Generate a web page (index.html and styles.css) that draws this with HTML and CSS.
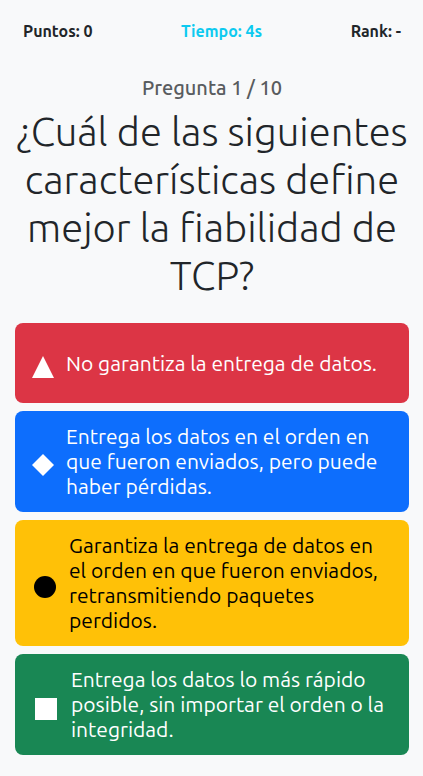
FILE: index.html
```html
<!DOCTYPE html>
<html lang="es">
<head>
<meta charset="utf-8">
<meta name="viewport" content="width=device-width, initial-scale=1">
<title>Pregunta 1 / 10</title>
<link rel="stylesheet" href="styles.css">
</head>
<body>
<header class="status">
  <span>Puntos: 0</span>
  <span class="time">Tiempo: 4s</span>
  <span>Rank: -</span>
</header>
<main class="quiz">
  <h5 class="counter">Pregunta 1 / 10</h5>
  <h1 class="question">¿Cuál de las siguientes características define mejor la fiabilidad de TCP?</h1>
  <div class="options">
    <button class="option red" type="button">
      <svg class="shape" width="22" height="30" viewBox="0 0 22 30" aria-hidden="true"><path d="M11 8L22 30H0Z"/></svg>
      <span>No garantiza la entrega de datos.</span>
    </button>
    <button class="option blue" type="button">
      <svg class="shape" width="22" height="30" viewBox="0 0 22 30" aria-hidden="true"><path d="M11 7L22 18L11 29L0 18Z"/></svg>
      <span>Entrega los datos en el orden en que fueron enviados, pero puede haber pérdidas.</span>
    </button>
    <button class="option yellow" type="button">
      <svg class="shape" width="25" height="30" viewBox="0 0 25 30" aria-hidden="true"><circle cx="13" cy="19" r="11"/></svg>
      <span>Garantiza la entrega de datos en el orden en que fueron enviados, retransmitiendo paquetes perdidos.</span>
    </button>
    <button class="option green" type="button">
      <svg class="shape" width="27" height="30" viewBox="0 0 27 30" aria-hidden="true"><path d="M3 8H25V30H3Z"/></svg>
      <span>Entrega los datos lo más rápido posible, sin importar el orden o la integridad.</span>
    </button>
  </div>
</main>
</body>
</html>
```
FILE: styles.css
```css
* { box-sizing: border-box; }
body {
  margin: 0;
  background: #f8f9fa;
  color: #212529;
  font-family: Ubuntu, "Noto Sans", sans-serif;
  font-size: 16px;
  line-height: 24px;
}
.status {
  display: flex;
  justify-content: space-between;
  padding: 19px 22px 19px 23px;
  font-weight: 700;
}
.time { color: #0dcaf0; }
.quiz { padding: 14px 14px 21px 15px; text-align: center; }
.counter { margin: 0 0 8px; font-size: 20px; font-weight: 500; line-height: 24px; color: #595c5f; }
.question { margin: 0 0 23px; font-size: 40px; font-weight: 300; line-height: 48px; }
.options { display: grid; gap: 8px; }
.option {
  display: flex;
  align-items: center;
  gap: 12px;
  min-height: 80px;
  padding: 13px 17px;
  border: 0;
  border-radius: 8px;
  color: #fff;
  font: inherit;
  font-size: 21px;
  line-height: 25px;
  text-align: left;
}
.shape { flex: none; fill: currentColor; }
.red { background: #dc3545; }
.blue { background: #0d6efd; }
.yellow { background: #ffc107; color: #000; }
.green { background: #198754; }
```
